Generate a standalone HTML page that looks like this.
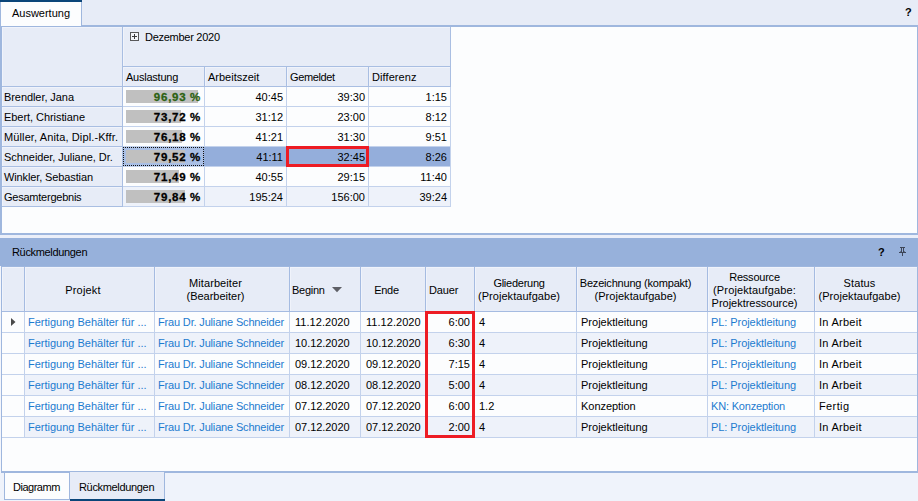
<!DOCTYPE html>
<html><head><meta charset="utf-8"><title>Auswertung</title>
<style>
html,body{margin:0;padding:0;}
body{width:918px;height:501px;overflow:hidden;background:#e7ecf7;position:relative;font-family:"Liberation Sans",sans-serif;font-size:11px;color:#000;}
div,svg,.t{position:absolute;display:block;}
.t{white-space:pre;line-height:13px;height:13px;}
.b{font-weight:bold;}
.pb{font-weight:bold;font-size:11.5px;letter-spacing:0.75px;word-spacing:-0.3px;-webkit-text-stroke:0.3px currentColor;}
</style></head><body>
<div style="left:0px;top:0px;width:82px;height:2px;background:#0a4579;"></div>
<div style="left:0px;top:2px;width:82px;height:24px;background:#9fb7de;"></div>
<div style="left:1px;top:2px;width:80px;height:24px;background:#fcfdfe;"></div>
<span class="t " style="left:12px;top:7px;letter-spacing:-0.01px;">Auswertung</span>
<span class="t b" style="left:905px;top:6px;">?</span>
<div style="left:82px;top:25px;width:836px;height:1px;background:#9fb7de;"></div>
<div style="left:0px;top:26px;width:918px;height:209px;background:#9fb7de;"></div>
<div style="left:2px;top:27px;width:915px;height:206px;background:#fcfdfe;"></div>
<div style="left:2px;top:27px;width:449px;height:60px;background:#e7ecf7;"></div>
<div style="left:2px;top:27px;width:449px;height:180px;background:#a9bee2;"></div>
<div style="left:123px;top:87px;width:328px;height:120px;background:#c3d2ec;"></div>
<div style="left:2px;top:27px;width:120px;height:59px;background:#e7ecf7;box-shadow:inset 1px 1px 0 #f0f3fb;"></div>
<div style="left:123px;top:27px;width:327px;height:39px;background:#e7ecf7;box-shadow:inset 1px 1px 0 #f0f3fb;"></div>
<div style="left:123px;top:67px;width:81px;height:19px;background:#e7ecf7;box-shadow:inset 1px 1px 0 #f0f3fb;"></div>
<div style="left:205px;top:67px;width:81px;height:19px;background:#e7ecf7;box-shadow:inset 1px 1px 0 #f0f3fb;"></div>
<div style="left:287px;top:67px;width:81px;height:19px;background:#e7ecf7;box-shadow:inset 1px 1px 0 #f0f3fb;"></div>
<div style="left:369px;top:67px;width:81px;height:19px;background:#e7ecf7;box-shadow:inset 1px 1px 0 #f0f3fb;"></div>
<svg style="left:130px;top:32px" width="9" height="9" viewBox="0 0 9 9"><rect x="0.5" y="0.5" width="8" height="8" fill="#f3f5fa" stroke="#58585a"/><path d="M2 4.5H7M4.5 2V7" stroke="#3a3a3c" stroke-width="1"/></svg>
<span class="t " style="left:145px;top:31px;letter-spacing:-0.272px;">Dezember 2020</span>
<span class="t " style="left:126px;top:71px;letter-spacing:-0.241px;">Auslastung</span>
<span class="t " style="left:208px;top:71px;letter-spacing:-0.005px;">Arbeitszeit</span>
<span class="t " style="left:290px;top:71px;letter-spacing:-0.37px;">Gemeldet</span>
<span class="t " style="left:372px;top:71px;letter-spacing:0.086px;">Differenz</span>
<div style="left:2px;top:87px;width:120px;height:19px;background:#e7ecf7;box-shadow:inset 1px 1px 0 #f0f3fb;"></div>
<span class="t " style="left:4px;top:91px;letter-spacing:-0.072px;">Brendler, Jana</span>
<div style="left:123px;top:87px;width:81px;height:19px;background:#fcfdfe;"></div>
<div style="left:205px;top:87px;width:81px;height:19px;background:#fcfdfe;"></div>
<div style="left:287px;top:87px;width:81px;height:19px;background:#fcfdfe;"></div>
<div style="left:369px;top:87px;width:81px;height:19px;background:#fcfdfe;"></div>
<div style="left:126px;top:90px;width:72px;height:13px;background:#c0c0c0;"></div>
<span class="t pb" style="left:123px;top:91px;width:78px;text-align:right;color:#2c6112;">96,93 %</span>
<span class="t " style="left:205px;top:91px;width:78px;text-align:right;">40:45</span>
<span class="t " style="left:287px;top:91px;width:78px;text-align:right;">39:30</span>
<span class="t " style="left:369px;top:91px;width:78px;text-align:right;">1:15</span>
<div style="left:2px;top:107px;width:120px;height:19px;background:#e7ecf7;box-shadow:inset 1px 1px 0 #f0f3fb;"></div>
<span class="t " style="left:4px;top:111px;letter-spacing:-0.058px;">Ebert, Christiane</span>
<div style="left:123px;top:107px;width:81px;height:19px;background:#fcfdfe;"></div>
<div style="left:205px;top:107px;width:81px;height:19px;background:#fcfdfe;"></div>
<div style="left:287px;top:107px;width:81px;height:19px;background:#fcfdfe;"></div>
<div style="left:369px;top:107px;width:81px;height:19px;background:#fcfdfe;"></div>
<div style="left:126px;top:110px;width:55px;height:13px;background:#c0c0c0;"></div>
<span class="t pb" style="left:123px;top:111px;width:78px;text-align:right;">73,72 %</span>
<span class="t " style="left:205px;top:111px;width:78px;text-align:right;">31:12</span>
<span class="t " style="left:287px;top:111px;width:78px;text-align:right;">23:00</span>
<span class="t " style="left:369px;top:111px;width:78px;text-align:right;">8:12</span>
<div style="left:2px;top:127px;width:120px;height:19px;background:#e7ecf7;box-shadow:inset 1px 1px 0 #f0f3fb;"></div>
<span class="t " style="left:4px;top:131px;letter-spacing:0.117px;">Müller, Anita, Dipl.-Kffr.</span>
<div style="left:123px;top:127px;width:81px;height:19px;background:#fcfdfe;"></div>
<div style="left:205px;top:127px;width:81px;height:19px;background:#fcfdfe;"></div>
<div style="left:287px;top:127px;width:81px;height:19px;background:#fcfdfe;"></div>
<div style="left:369px;top:127px;width:81px;height:19px;background:#fcfdfe;"></div>
<div style="left:126px;top:130px;width:56px;height:13px;background:#c0c0c0;"></div>
<span class="t pb" style="left:123px;top:131px;width:78px;text-align:right;">76,18 %</span>
<span class="t " style="left:205px;top:131px;width:78px;text-align:right;">41:21</span>
<span class="t " style="left:287px;top:131px;width:78px;text-align:right;">31:30</span>
<span class="t " style="left:369px;top:131px;width:78px;text-align:right;">9:51</span>
<div style="left:2px;top:147px;width:120px;height:19px;background:#e7ecf7;box-shadow:inset 1px 1px 0 #f0f3fb;"></div>
<span class="t " style="left:4px;top:151px;letter-spacing:-0.062px;">Schneider, Juliane, Dr.</span>
<div style="left:123px;top:147px;width:81px;height:19px;background:#94aedb;"></div>
<div style="left:204px;top:147px;width:82px;height:19px;background:#94aedb;"></div>
<div style="left:286px;top:147px;width:82px;height:19px;background:#94aedb;"></div>
<div style="left:368px;top:147px;width:82px;height:19px;background:#94aedb;"></div>
<div style="left:123px;top:147px;width:81px;height:19px;background:#a9bfe5;outline:1px dotted #111;outline-offset:-1px;"></div>
<div style="left:126px;top:150px;width:59px;height:13px;background:#c0c0c0;"></div>
<span class="t pb" style="left:123px;top:151px;width:78px;text-align:right;">79,52 %</span>
<span class="t " style="left:205px;top:151px;width:78px;text-align:right;">41:11</span>
<span class="t " style="left:287px;top:151px;width:78px;text-align:right;">32:45</span>
<span class="t " style="left:369px;top:151px;width:78px;text-align:right;">8:26</span>
<div style="left:2px;top:167px;width:120px;height:19px;background:#e7ecf7;box-shadow:inset 1px 1px 0 #f0f3fb;"></div>
<span class="t " style="left:4px;top:171px;letter-spacing:-0.123px;">Winkler, Sebastian</span>
<div style="left:123px;top:167px;width:81px;height:19px;background:#fcfdfe;"></div>
<div style="left:205px;top:167px;width:81px;height:19px;background:#fcfdfe;"></div>
<div style="left:287px;top:167px;width:81px;height:19px;background:#fcfdfe;"></div>
<div style="left:369px;top:167px;width:81px;height:19px;background:#fcfdfe;"></div>
<div style="left:126px;top:170px;width:53px;height:13px;background:#c0c0c0;"></div>
<span class="t pb" style="left:123px;top:171px;width:78px;text-align:right;">71,49 %</span>
<span class="t " style="left:205px;top:171px;width:78px;text-align:right;">40:55</span>
<span class="t " style="left:287px;top:171px;width:78px;text-align:right;">29:15</span>
<span class="t " style="left:369px;top:171px;width:78px;text-align:right;">11:40</span>
<div style="left:2px;top:187px;width:120px;height:19px;background:#e7ecf7;box-shadow:inset 1px 1px 0 #f0f3fb;"></div>
<span class="t " style="left:4px;top:191px;letter-spacing:-0.239px;">Gesamtergebnis</span>
<div style="left:123px;top:187px;width:81px;height:19px;background:#eef2fa;"></div>
<div style="left:205px;top:187px;width:81px;height:19px;background:#eef2fa;"></div>
<div style="left:287px;top:187px;width:81px;height:19px;background:#eef2fa;"></div>
<div style="left:369px;top:187px;width:81px;height:19px;background:#eef2fa;"></div>
<div style="left:126px;top:190px;width:59px;height:13px;background:#c0c0c0;"></div>
<span class="t pb" style="left:123px;top:191px;width:78px;text-align:right;">79,84 %</span>
<span class="t " style="left:205px;top:191px;width:78px;text-align:right;">195:24</span>
<span class="t " style="left:287px;top:191px;width:78px;text-align:right;">156:00</span>
<span class="t " style="left:369px;top:191px;width:78px;text-align:right;">39:24</span>
<div style="left:286px;top:146px;width:83px;height:21px;background:transparent;border:3px solid #ed1c24;box-sizing:border-box;"></div>
<div style="left:0px;top:235px;width:918px;height:3px;background:#ebeff9;"></div>
<div style="left:0px;top:238px;width:918px;height:28px;background:#97b1db;"></div>
<span class="t " style="left:12px;top:246px;letter-spacing:-0.332px;">Rückmeldungen</span>
<span class="t b" style="left:878px;top:246px;">?</span>
<svg style="left:899px;top:247px" width="7" height="9" viewBox="0 0 7 9"><path d="M1 0.5H6M2.5 1V5M4.5 1V5M0 5.5H7M3.5 6V9" stroke="#3d4658" stroke-width="1" fill="none"/><rect x="1" y="4" width="1" height="1" fill="#3d4658" opacity="0.55"/><rect x="5" y="4" width="1" height="1" fill="#3d4658" opacity="0.55"/></svg>
<div style="left:0px;top:266px;width:1px;height:207px;background:#f4f6fc;"></div>
<div style="left:1px;top:266px;width:917px;height:207px;background:#9fb7de;"></div>
<div style="left:2px;top:267px;width:915px;height:204px;background:#fcfdfe;"></div>
<div style="left:2px;top:267px;width:915px;height:45px;background:#a5bbe1;"></div>
<div style="left:2px;top:267px;width:22px;height:44px;background:#e7ecf7;box-shadow:inset 1px 1px 0 #f0f3fb;"></div>
<div style="left:25px;top:267px;width:129px;height:44px;background:#e7ecf7;box-shadow:inset 1px 1px 0 #f0f3fb;"></div>
<div style="left:155px;top:267px;width:134px;height:44px;background:#e7ecf7;box-shadow:inset 1px 1px 0 #f0f3fb;"></div>
<div style="left:290px;top:267px;width:70px;height:44px;background:#e7ecf7;box-shadow:inset 1px 1px 0 #f0f3fb;"></div>
<div style="left:361px;top:267px;width:64px;height:44px;background:#e7ecf7;box-shadow:inset 1px 1px 0 #f0f3fb;"></div>
<div style="left:426px;top:267px;width:48px;height:44px;background:#e7ecf7;box-shadow:inset 1px 1px 0 #f0f3fb;"></div>
<div style="left:475px;top:267px;width:101px;height:44px;background:#e7ecf7;box-shadow:inset 1px 1px 0 #f0f3fb;"></div>
<div style="left:577px;top:267px;width:130px;height:44px;background:#e7ecf7;box-shadow:inset 1px 1px 0 #f0f3fb;"></div>
<div style="left:708px;top:267px;width:106px;height:44px;background:#e7ecf7;box-shadow:inset 1px 1px 0 #f0f3fb;"></div>
<div style="left:815px;top:267px;width:102px;height:44px;background:#e7ecf7;box-shadow:inset 1px 1px 0 #f0f3fb;"></div>
<span class="t " style="left:25px;top:284px;width:116px;text-align:center;letter-spacing:0.194px;">Projekt</span>
<span class="t " style="left:155px;top:277px;width:121px;text-align:center;letter-spacing:0.084px;">Mitarbeiter</span>
<span class="t " style="left:155px;top:290px;width:121px;text-align:center;letter-spacing:-0.007px;">(Bearbeiter)</span>
<span class="t " style="left:292px;top:284px;letter-spacing:-0.27px;">Beginn</span>
<svg style="left:332px;top:287px" width="10" height="6" viewBox="0 0 10 6"><path d="M0 0H10L5 5.2Z" fill="#5e5f66"/></svg>
<span class="t " style="left:361px;top:284px;width:51px;text-align:center;letter-spacing:-0.296px;">Ende</span>
<span class="t " style="left:429px;top:284px;letter-spacing:-0.164px;">Dauer</span>
<span class="t " style="left:475px;top:277px;width:88px;text-align:center;letter-spacing:-0.257px;">Gliederung</span>
<span class="t " style="left:475px;top:290px;width:88px;text-align:center;letter-spacing:0.045px;">(Projektaufgabe)</span>
<span class="t " style="left:577px;top:277px;width:117px;text-align:center;letter-spacing:-0.198px;">Bezeichnung (kompakt)</span>
<span class="t " style="left:577px;top:290px;width:117px;text-align:center;letter-spacing:0.045px;">(Projektaufgabe)</span>
<span class="t " style="left:708px;top:271px;width:93px;text-align:center;letter-spacing:-0.222px;">Ressource</span>
<span class="t " style="left:708px;top:284px;width:93px;text-align:center;letter-spacing:0.132px;">(Projektaufgabe:</span>
<span class="t " style="left:708px;top:297px;width:93px;text-align:center;letter-spacing:-0.024px;">Projektressource)</span>
<span class="t " style="left:815px;top:277px;width:89px;text-align:center;letter-spacing:0.143px;">Status</span>
<span class="t " style="left:815px;top:290px;width:89px;text-align:center;letter-spacing:0.045px;">(Projektaufgabe)</span>
<div style="left:2px;top:312px;width:915px;height:126px;background:#c3d2ec;"></div>
<div style="left:2px;top:312px;width:22px;height:20px;background:#fcfdfe;"></div>
<div style="left:25px;top:312px;width:129px;height:20px;background:#fcfdfe;"></div>
<div style="left:155px;top:312px;width:134px;height:20px;background:#fcfdfe;"></div>
<div style="left:290px;top:312px;width:70px;height:20px;background:#fcfdfe;"></div>
<div style="left:361px;top:312px;width:64px;height:20px;background:#fcfdfe;"></div>
<div style="left:426px;top:312px;width:48px;height:20px;background:#fcfdfe;"></div>
<div style="left:475px;top:312px;width:101px;height:20px;background:#fcfdfe;"></div>
<div style="left:577px;top:312px;width:130px;height:20px;background:#fcfdfe;"></div>
<div style="left:708px;top:312px;width:106px;height:20px;background:#fcfdfe;"></div>
<div style="left:815px;top:312px;width:102px;height:20px;background:#fcfdfe;"></div>
<span class="t " style="left:28px;top:316px;color:#1c7bcf;">Fertigung Behälter für ...</span>
<span class="t " style="left:158px;top:316px;letter-spacing:-0.165px;color:#1c7bcf;">Frau Dr. Juliane Schneider</span>
<span class="t " style="left:295px;top:316px;letter-spacing:0.041px;">11.12.2020</span>
<span class="t " style="left:366px;top:316px;letter-spacing:0.041px;">11.12.2020</span>
<span class="t " style="left:426px;top:316px;width:44px;text-align:right;">6:00</span>
<span class="t " style="left:479px;top:316px;">4</span>
<span class="t " style="left:581px;top:316px;letter-spacing:0.004px;">Projektleitung</span>
<span class="t " style="left:711px;top:316px;letter-spacing:-0.066px;color:#1c7bcf;">PL: Projektleitung</span>
<span class="t " style="left:819px;top:316px;letter-spacing:0.268px;">In Arbeit</span>
<div style="left:2px;top:333px;width:22px;height:20px;background:#fcfdfe;"></div>
<div style="left:25px;top:333px;width:129px;height:20px;background:#eef2fa;"></div>
<div style="left:155px;top:333px;width:134px;height:20px;background:#eef2fa;"></div>
<div style="left:290px;top:333px;width:70px;height:20px;background:#eef2fa;"></div>
<div style="left:361px;top:333px;width:64px;height:20px;background:#eef2fa;"></div>
<div style="left:426px;top:333px;width:48px;height:20px;background:#eef2fa;"></div>
<div style="left:475px;top:333px;width:101px;height:20px;background:#eef2fa;"></div>
<div style="left:577px;top:333px;width:130px;height:20px;background:#eef2fa;"></div>
<div style="left:708px;top:333px;width:106px;height:20px;background:#eef2fa;"></div>
<div style="left:815px;top:333px;width:102px;height:20px;background:#eef2fa;"></div>
<span class="t " style="left:28px;top:337px;color:#1c7bcf;">Fertigung Behälter für ...</span>
<span class="t " style="left:158px;top:337px;letter-spacing:-0.165px;color:#1c7bcf;">Frau Dr. Juliane Schneider</span>
<span class="t " style="left:295px;top:337px;letter-spacing:-0.05px;">10.12.2020</span>
<span class="t " style="left:366px;top:337px;letter-spacing:-0.05px;">10.12.2020</span>
<span class="t " style="left:426px;top:337px;width:44px;text-align:right;">6:30</span>
<span class="t " style="left:479px;top:337px;">4</span>
<span class="t " style="left:581px;top:337px;letter-spacing:0.004px;">Projektleitung</span>
<span class="t " style="left:711px;top:337px;letter-spacing:-0.066px;color:#1c7bcf;">PL: Projektleitung</span>
<span class="t " style="left:819px;top:337px;letter-spacing:0.268px;">In Arbeit</span>
<div style="left:2px;top:354px;width:22px;height:20px;background:#fcfdfe;"></div>
<div style="left:25px;top:354px;width:129px;height:20px;background:#fcfdfe;"></div>
<div style="left:155px;top:354px;width:134px;height:20px;background:#fcfdfe;"></div>
<div style="left:290px;top:354px;width:70px;height:20px;background:#fcfdfe;"></div>
<div style="left:361px;top:354px;width:64px;height:20px;background:#fcfdfe;"></div>
<div style="left:426px;top:354px;width:48px;height:20px;background:#fcfdfe;"></div>
<div style="left:475px;top:354px;width:101px;height:20px;background:#fcfdfe;"></div>
<div style="left:577px;top:354px;width:130px;height:20px;background:#fcfdfe;"></div>
<div style="left:708px;top:354px;width:106px;height:20px;background:#fcfdfe;"></div>
<div style="left:815px;top:354px;width:102px;height:20px;background:#fcfdfe;"></div>
<span class="t " style="left:28px;top:358px;color:#1c7bcf;">Fertigung Behälter für ...</span>
<span class="t " style="left:158px;top:358px;letter-spacing:-0.165px;color:#1c7bcf;">Frau Dr. Juliane Schneider</span>
<span class="t " style="left:295px;top:358px;letter-spacing:-0.05px;">09.12.2020</span>
<span class="t " style="left:366px;top:358px;letter-spacing:-0.05px;">09.12.2020</span>
<span class="t " style="left:426px;top:358px;width:44px;text-align:right;">7:15</span>
<span class="t " style="left:479px;top:358px;">4</span>
<span class="t " style="left:581px;top:358px;letter-spacing:0.004px;">Projektleitung</span>
<span class="t " style="left:711px;top:358px;letter-spacing:-0.066px;color:#1c7bcf;">PL: Projektleitung</span>
<span class="t " style="left:819px;top:358px;letter-spacing:0.268px;">In Arbeit</span>
<div style="left:2px;top:375px;width:22px;height:20px;background:#fcfdfe;"></div>
<div style="left:25px;top:375px;width:129px;height:20px;background:#eef2fa;"></div>
<div style="left:155px;top:375px;width:134px;height:20px;background:#eef2fa;"></div>
<div style="left:290px;top:375px;width:70px;height:20px;background:#eef2fa;"></div>
<div style="left:361px;top:375px;width:64px;height:20px;background:#eef2fa;"></div>
<div style="left:426px;top:375px;width:48px;height:20px;background:#eef2fa;"></div>
<div style="left:475px;top:375px;width:101px;height:20px;background:#eef2fa;"></div>
<div style="left:577px;top:375px;width:130px;height:20px;background:#eef2fa;"></div>
<div style="left:708px;top:375px;width:106px;height:20px;background:#eef2fa;"></div>
<div style="left:815px;top:375px;width:102px;height:20px;background:#eef2fa;"></div>
<span class="t " style="left:28px;top:379px;color:#1c7bcf;">Fertigung Behälter für ...</span>
<span class="t " style="left:158px;top:379px;letter-spacing:-0.165px;color:#1c7bcf;">Frau Dr. Juliane Schneider</span>
<span class="t " style="left:295px;top:379px;letter-spacing:-0.05px;">08.12.2020</span>
<span class="t " style="left:366px;top:379px;letter-spacing:-0.05px;">08.12.2020</span>
<span class="t " style="left:426px;top:379px;width:44px;text-align:right;">5:00</span>
<span class="t " style="left:479px;top:379px;">4</span>
<span class="t " style="left:581px;top:379px;letter-spacing:0.004px;">Projektleitung</span>
<span class="t " style="left:711px;top:379px;letter-spacing:-0.066px;color:#1c7bcf;">PL: Projektleitung</span>
<span class="t " style="left:819px;top:379px;letter-spacing:0.268px;">In Arbeit</span>
<div style="left:2px;top:396px;width:22px;height:20px;background:#fcfdfe;"></div>
<div style="left:25px;top:396px;width:129px;height:20px;background:#fcfdfe;"></div>
<div style="left:155px;top:396px;width:134px;height:20px;background:#fcfdfe;"></div>
<div style="left:290px;top:396px;width:70px;height:20px;background:#fcfdfe;"></div>
<div style="left:361px;top:396px;width:64px;height:20px;background:#fcfdfe;"></div>
<div style="left:426px;top:396px;width:48px;height:20px;background:#fcfdfe;"></div>
<div style="left:475px;top:396px;width:101px;height:20px;background:#fcfdfe;"></div>
<div style="left:577px;top:396px;width:130px;height:20px;background:#fcfdfe;"></div>
<div style="left:708px;top:396px;width:106px;height:20px;background:#fcfdfe;"></div>
<div style="left:815px;top:396px;width:102px;height:20px;background:#fcfdfe;"></div>
<span class="t " style="left:28px;top:400px;color:#1c7bcf;">Fertigung Behälter für ...</span>
<span class="t " style="left:158px;top:400px;letter-spacing:-0.165px;color:#1c7bcf;">Frau Dr. Juliane Schneider</span>
<span class="t " style="left:295px;top:400px;letter-spacing:-0.05px;">07.12.2020</span>
<span class="t " style="left:366px;top:400px;letter-spacing:-0.05px;">07.12.2020</span>
<span class="t " style="left:426px;top:400px;width:44px;text-align:right;">6:00</span>
<span class="t " style="left:479px;top:400px;">1.2</span>
<span class="t " style="left:581px;top:400px;letter-spacing:-0.038px;">Konzeption</span>
<span class="t " style="left:711px;top:400px;letter-spacing:-0.172px;color:#1c7bcf;">KN: Konzeption</span>
<span class="t " style="left:819px;top:400px;letter-spacing:0.377px;">Fertig</span>
<div style="left:2px;top:417px;width:22px;height:20px;background:#fcfdfe;"></div>
<div style="left:25px;top:417px;width:129px;height:20px;background:#eef2fa;"></div>
<div style="left:155px;top:417px;width:134px;height:20px;background:#eef2fa;"></div>
<div style="left:290px;top:417px;width:70px;height:20px;background:#eef2fa;"></div>
<div style="left:361px;top:417px;width:64px;height:20px;background:#eef2fa;"></div>
<div style="left:426px;top:417px;width:48px;height:20px;background:#eef2fa;"></div>
<div style="left:475px;top:417px;width:101px;height:20px;background:#eef2fa;"></div>
<div style="left:577px;top:417px;width:130px;height:20px;background:#eef2fa;"></div>
<div style="left:708px;top:417px;width:106px;height:20px;background:#eef2fa;"></div>
<div style="left:815px;top:417px;width:102px;height:20px;background:#eef2fa;"></div>
<span class="t " style="left:28px;top:421px;color:#1c7bcf;">Fertigung Behälter für ...</span>
<span class="t " style="left:158px;top:421px;letter-spacing:-0.165px;color:#1c7bcf;">Frau Dr. Juliane Schneider</span>
<span class="t " style="left:295px;top:421px;letter-spacing:-0.05px;">07.12.2020</span>
<span class="t " style="left:366px;top:421px;letter-spacing:-0.05px;">07.12.2020</span>
<span class="t " style="left:426px;top:421px;width:44px;text-align:right;">2:00</span>
<span class="t " style="left:479px;top:421px;">4</span>
<span class="t " style="left:581px;top:421px;letter-spacing:0.004px;">Projektleitung</span>
<span class="t " style="left:711px;top:421px;letter-spacing:-0.066px;color:#1c7bcf;">PL: Projektleitung</span>
<span class="t " style="left:819px;top:421px;letter-spacing:0.268px;">In Arbeit</span>
<svg style="left:11px;top:318px" width="5" height="8" viewBox="0 0 5 8"><path d="M0 0L4.5 4L0 8Z" fill="#4a4a4a"/></svg>
<div style="left:425px;top:311px;width:50px;height:127px;background:transparent;border:3px solid #ed1c24;box-sizing:border-box;"></div>
<div style="left:0px;top:473px;width:918px;height:28px;background:#eff3fb;"></div>
<div style="left:4px;top:473px;width:66px;height:27px;background:#9fb7de;"></div>
<div style="left:5px;top:473px;width:64px;height:26px;background:#fcfdfe;"></div>
<div style="left:70px;top:472px;width:95px;height:27px;background:#9fb7de;"></div>
<div style="left:70px;top:472px;width:94px;height:27px;background:#e7ecf7;"></div>
<div style="left:70px;top:499px;width:95px;height:2px;background:#0a4579;"></div>
<span class="t " style="left:13px;top:481px;letter-spacing:-0.49px;">Diagramm</span>
<span class="t " style="left:79px;top:481px;letter-spacing:-0.332px;">Rückmeldungen</span>
</body></html>
